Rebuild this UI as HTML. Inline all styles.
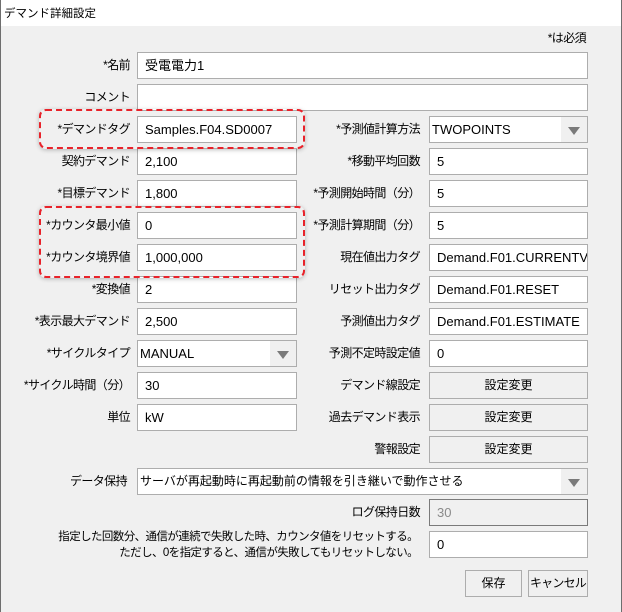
<!DOCTYPE html>
<html><head><meta charset="utf-8"><style>
*{box-sizing:border-box;margin:0;padding:0}
body{width:622px;height:612px;background:#f0f0f0;font-family:"Liberation Sans","Noto Sans CJK JP",sans-serif;font-size:13px;color:#000;position:relative;overflow:hidden}
.title{position:absolute;left:0;top:0;width:622px;height:26px;background:#fff;font-size:11.5px;padding:5px 0 0 4px}
.frame{position:absolute;left:0;top:0;width:622px;height:612px;border-left:1px solid #6e6e6e;border-right:1px solid #6e6e6e;pointer-events:none}
.l{position:absolute;text-align:right;height:27px;line-height:27px;white-space:nowrap;font-size:12px;letter-spacing:-0.6px}
.i{position:absolute;height:27px;line-height:25px;background:#fff;border:1px solid #adadad;padding-left:7px;white-space:nowrap;overflow:hidden}
.c{padding-left:2px}
.c:after{content:"";position:absolute;right:0;top:0;width:26px;height:25px;background:#f0f0f0}
.c b{position:absolute;right:7px;top:10px;width:0;height:0;border-left:6px solid transparent;border-right:6px solid transparent;border-top:8px solid #7a7a7a;z-index:2}
.btn{position:absolute;height:27px;line-height:25px;background:#f0f0f0;border:1px solid #adadad;text-align:center;white-space:nowrap;font-size:12px}
.dis{background:#f0f0f0;border-color:#7a7a7a;color:#8a8a8a}
.red{position:absolute;border:2px dashed #e8222a;border-radius:7px;box-shadow:0 1px 4px rgba(0,0,0,.25)}
</style></head><body>
<div class="title">デマンド詳細設定</div>
<div class="l" style="right:36px;top:28px;height:20px;line-height:20px">*は必須</div>

<div class="l" style="right:492px;top:52px">*名前</div><div class="i" style="left:137px;top:52px;width:451px">受電電力1</div>
<div class="l" style="right:492px;top:84px">コメント</div><div class="i" style="left:137px;top:84px;width:451px"></div>
<div class="l" style="right:492px;top:116px">*デマンドタグ</div><div class="i" style="left:137px;top:116px;width:160px">Samples.F04.SD0007</div>
<div class="l" style="right:492px;top:148px">契約デマンド</div><div class="i" style="left:137px;top:148px;width:160px">2,100</div>
<div class="l" style="right:492px;top:180px">*目標デマンド</div><div class="i" style="left:137px;top:180px;width:160px">1,800</div>
<div class="l" style="right:492px;top:212px">*カウンタ最小値</div><div class="i" style="left:137px;top:212px;width:160px">0</div>
<div class="l" style="right:492px;top:244px">*カウンタ境界値</div><div class="i" style="left:137px;top:244px;width:160px">1,000,000</div>
<div class="l" style="right:492px;top:276px">*変換値</div><div class="i" style="left:137px;top:276px;width:160px">2</div>
<div class="l" style="right:492px;top:308px">*表示最大デマンド</div><div class="i" style="left:137px;top:308px;width:160px">2,500</div>
<div class="l" style="right:492px;top:340px">*サイクルタイプ</div><div class="i c" style="left:137px;top:340px;width:160px">MANUAL<b></b></div>
<div class="l" style="right:492px;top:372px">*サイクル時間（分）</div><div class="i" style="left:137px;top:372px;width:160px">30</div>
<div class="l" style="right:492px;top:404px">単位</div><div class="i" style="left:137px;top:404px;width:160px">kW</div>

<div class="l" style="right:202px;top:116px">*予測値計算方法</div><div class="i c" style="left:429px;top:116px;width:159px">TWOPOINTS<b></b></div>
<div class="l" style="right:202px;top:148px">*移動平均回数</div><div class="i" style="left:429px;top:148px;width:159px">5</div>
<div class="l" style="right:202px;top:180px">*予測開始時間（分）</div><div class="i" style="left:429px;top:180px;width:159px">5</div>
<div class="l" style="right:202px;top:212px">*予測計算期間（分）</div><div class="i" style="left:429px;top:212px;width:159px">5</div>
<div class="l" style="right:202px;top:244px">現在値出力タグ</div><div class="i" style="left:429px;top:244px;width:159px">Demand.F01.CURRENTVALUE</div>
<div class="l" style="right:202px;top:276px">リセット出力タグ</div><div class="i" style="left:429px;top:276px;width:159px">Demand.F01.RESET</div>
<div class="l" style="right:202px;top:308px">予測値出力タグ</div><div class="i" style="left:429px;top:308px;width:159px">Demand.F01.ESTIMATE</div>
<div class="l" style="right:202px;top:340px">予測不定時設定値</div><div class="i" style="left:429px;top:340px;width:159px">0</div>
<div class="l" style="right:202px;top:372px">デマンド線設定</div><div class="btn" style="left:429px;top:372px;width:159px">設定変更</div>
<div class="l" style="right:202px;top:404px">過去デマンド表示</div><div class="btn" style="left:429px;top:404px;width:159px">設定変更</div>
<div class="l" style="right:202px;top:436px">警報設定</div><div class="btn" style="left:429px;top:436px;width:159px">設定変更</div>

<div class="l" style="right:495px;top:468px">データ保持</div><div class="i c" style="left:137px;top:468px;width:451px;font-size:12px">サーバが再起動時に再起動前の情報を引き継いで動作させる<b></b></div>
<div class="l" style="right:202px;top:499px">ログ保持日数</div><div class="i dis" style="left:429px;top:499px;width:159px">30</div>
<div class="l" style="right:204px;top:529px;height:16px;line-height:16px;font-size:11.5px">指定した回数分、通信が連続で失敗した時、カウンタ値をリセットする。</div>
<div class="l" style="right:204px;top:545px;height:16px;line-height:16px;font-size:11.5px">ただし、0を指定すると、通信が失敗してもリセットしない。</div>
<div class="i" style="left:429px;top:531px;width:159px">0</div>
<div class="btn" style="left:465px;top:570px;width:57px">保存</div>
<div class="btn" style="left:528px;top:570px;width:60px;letter-spacing:-0.8px">キャンセル</div>

<div class="red" style="left:39px;top:109px;width:266px;height:40px"></div>
<div class="red" style="left:39px;top:206px;width:266px;height:72px"></div>
<div class="frame"></div>
</body></html>
